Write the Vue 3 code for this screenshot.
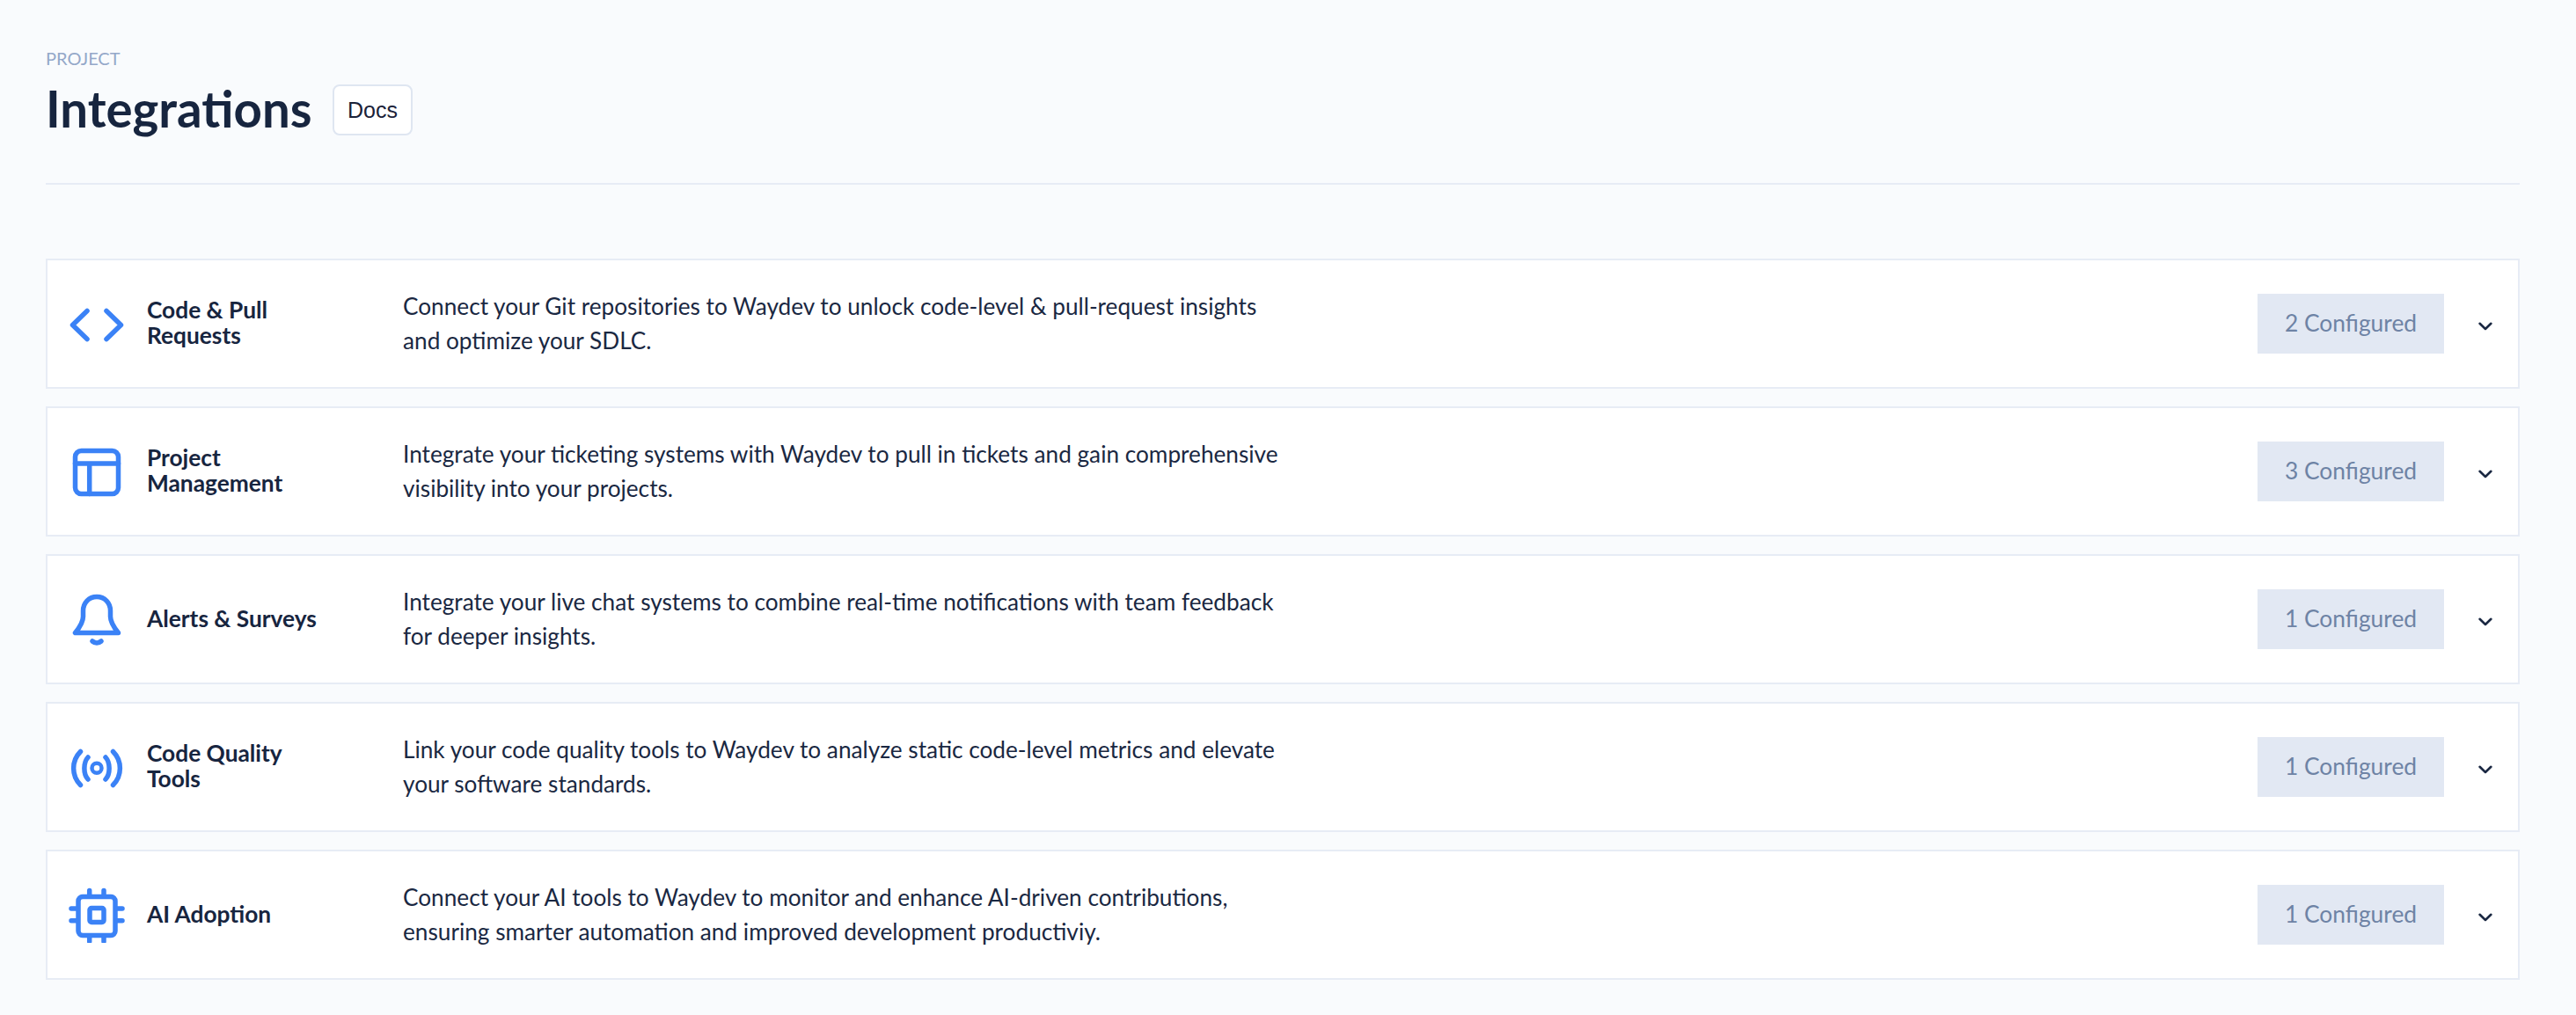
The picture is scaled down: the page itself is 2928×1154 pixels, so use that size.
<script setup>
const rows = [
  { icon: 'code', name: ['Code & Pull', 'Requests'], lines: ['Connect your Git repositories to Waydev to unlock code-level & pull-request insights', 'and optimize your SDLC.'], count: 2 },
  { icon: 'table', name: ['Project', 'Management'], lines: ['Integrate your ticketing systems with Waydev to pull in tickets and gain comprehensive', 'visibility into your projects.'], count: 3 },
  { icon: 'bell', name: ['Alerts & Surveys'], lines: ['Integrate your live chat systems to combine real-time notifications with team feedback', 'for deeper insights.'], count: 1 },
  { icon: 'signal', name: ['Code Quality', 'Tools'], lines: ['Link your code quality tools to Waydev to analyze static code-level metrics and elevate', 'your software standards.'], count: 1 },
  { icon: 'chip', name: ['AI Adoption'], lines: ['Connect your AI tools to Waydev to monitor and enhance AI-driven contributions,', 'ensuring smarter automation and improved development productiviy.'], count: 1 },
]
</script>

<template>
  <div class="page">
    <header class="head">
      <div class="eyebrow">PROJECT</div>
      <div class="title-row">
        <h1 class="title">Integrations</h1>
        <button class="docs">Docs</button>
      </div>
    </header>
    <div class="list">
      <section v-for="r in rows" :key="r.icon" class="card">
        <svg class="icon" viewBox="0 0 64 64" fill="none" stroke="#3b82f6" stroke-width="5.5" stroke-linecap="round" stroke-linejoin="round">
          <template v-if="r.icon === 'code'">
            <path d="M21 17.5 L4.5 33.5 L21 49.5" />
            <path d="M43 17.5 L59.5 33.5 L43 49.5" />
          </template>
          <template v-else-if="r.icon === 'table'">
            <rect x="7.5" y="8.5" width="49" height="49" rx="7" />
            <path d="M7.5 23 H56.5 M23.7 23 V57.5" />
          </template>
          <template v-else-if="r.icon === 'bell'">
            <path d="M32 6.5 C23 6.5 16.5 13.5 16.5 22.5 V29 C16.5 36 12 42 7.5 47.5 H56.5 C52 42 47.5 36 47.5 29 V22.5 C47.5 13.5 41 6.5 32 6.5 Z" />
            <path d="M27 57 Q32 61 37 57" />
          </template>
          <template v-else-if="r.icon === 'signal'">
            <circle cx="32" cy="33.3" r="5.5" stroke-width="4.5" />
            <path d="M13.5 14.5 C3 25 3 42 13.5 52.5 M50.5 14.5 C61 25 61 42 50.5 52.5" />
            <path d="M22 21 C16.5 27 16.5 40 22 46 M42 21 C47.5 27 47.5 40 42 46" />
          </template>
          <template v-else>
            <rect x="11" y="11.5" width="42" height="44" rx="5" />
            <rect x="24" y="24.5" width="16" height="16" rx="2" />
            <path d="M23.7 4.5 V10 M40 4.5 V10 M23.7 57 V62.5 M40 57 V62.5 M3 25 H9 M3 38.7 H9 M55 25 H61 M55 38.7 H61" />
          </template>
        </svg>
        <div class="name">
          <span v-for="n in r.name" :key="n" class="line">{{ n }}</span>
        </div>
        <p class="desc">
          <span v-for="l in r.lines" :key="l" class="line">{{ l }}</span>
        </p>
        <div class="badge">{{ r.count }} Configured</div>
        <svg class="chev" viewBox="0 0 16 10" fill="none" stroke="#1a2842" stroke-width="2.6" stroke-linecap="round" stroke-linejoin="round">
          <path d="M1.6 1.8 L8 8 L14.4 1.8" />
        </svg>
      </section>
    </div>
  </div>
</template>

<style>
html, body { margin: 0; background: #f9fbfd; }
</style>

<style scoped>
.page {
  box-sizing: border-box;
  width: 2928px;
  min-height: 1154px;
  padding: 54px 64px 0 52px;
  background: #f9fbfd;
  font-family: Lato, "Noto Sans", sans-serif;
  color: #1a2842;
}
.head {
  height: 154px;
  border-bottom: 2px solid #e7ecf5;
}
.eyebrow {
  font-size: 20px;
  line-height: 24px;
  color: #94a8c9;
}
.title-row {
  display: flex;
  align-items: center;
  gap: 26px;
  margin-top: 18px;
}
.title {
  margin: -5px 0 0;
  width: 300px;
  font-size: 56.4px;
  line-height: 58px;
  font-weight: 700;
  white-space: nowrap;
  color: #17253f;
}
.docs {
  box-sizing: border-box;
  width: 91px;
  height: 58px;
  padding: 0;
  background: #fff;
  border: 2px solid #dfe6f1;
  border-radius: 8px;
  font-family: "Liberation Sans", sans-serif;
  font-size: 25px;
  color: #1a2238;
}
.list {
  display: flex;
  flex-direction: column;
  gap: 20px;
  margin-top: 84px;
}
.card {
  box-sizing: border-box;
  height: 148px;
  display: flex;
  align-items: center;
  padding: 0 29px 0 24px;
  background: #fff;
  border: 2px solid #e7ecf5;
}
.icon {
  width: 64px;
  height: 64px;
  flex: none;
}
.name {
  width: 266px;
  margin-left: 25px;
  margin-top: -2px;
  font-size: 26.3px;
  line-height: 29px;
  font-weight: 700;
  color: #17253f;
  flex: none;
}
.desc {
  margin: 0 0 0 25px;
  flex: 1;
  font-size: 26.2px;
  line-height: 39px;
  color: #1a2842;
}
.line {
  display: block;
  white-space: nowrap;
}
.badge {
  box-sizing: border-box;
  width: 212px;
  height: 68px;
  padding-bottom: 2px;
  display: flex;
  align-items: center;
  justify-content: center;
  background: #e2e8f3;
  color: #6e83a5;
  font-size: 26.4px;
  flex: none;
}
.chev {
  width: 16px;
  height: 10px;
  margin-left: 39px;
  margin-top: 6px;
  flex: none;
}
</style>
